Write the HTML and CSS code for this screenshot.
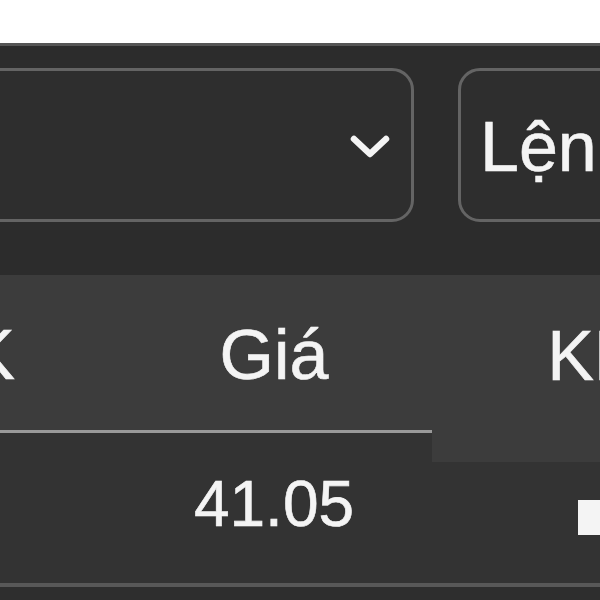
FILE: index.html
```html
<!DOCTYPE html>
<html lang="vi">
<head>
  <meta charset="UTF-8">
  <meta name="viewport" content="width=device-width, initial-scale=1.0"/>
  <title>Lệnh - Bảng giá</title>
  <link rel="stylesheet" href="styles.css">
</head>
<body>

  <div class="panel">
    <!-- Filters -->
    <div class="filters">
      <div class="select">
        <svg class="chevron" width="44" height="30" viewBox="0 0 44 30">
          <path d="M6 7 L22 22 L38 7" fill="none" stroke="#f4f4f4" stroke-width="6.5" stroke-linecap="round" stroke-linejoin="round"/>
        </svg>
      </div>
      <div class="order-type">Lệnh</div>
    </div>

    <!-- Price table -->
    <div class="table">
      <div class="row head">
        <div class="cell ck">Mã CK</div>
        <div class="cell price">Giá</div>
        <div class="cell kl">KL</div>
      </div>
      <div class="row data">
        <div class="cell ck"></div>
        <div class="cell price">41.05</div>
        <div class="cell kl"><span class="vol-bar"></span></div>
      </div>
    </div>
  </div>

</body>
</html>
```

FILE: styles.css
```css
/* Global Styles */
* {
  margin: 0;
  padding: 0;
  box-sizing: border-box;
}

body {
  font-family: 'Liberation Sans', Arial, sans-serif;
  background-color: #fff;
  color: #f4f4f4;
  overflow: hidden;
}

/* Panel */
.panel {
  margin-top: 43px;
  border-top: 3px solid #555;
  background: #2e2e2e;
  min-height: calc(100vh - 43px);
  overflow: hidden;
}

/* Filters */
.filters {
  display: flex;
  gap: 44px;
  margin-left: -40px;
  padding: 22px 0 53px;
  background: #2c2c2c;
}

.select {
  flex: 0 0 454px;
  height: 154px;
  border: 3px solid #646464;
  border-radius: 22px;
  background: #2e2e2e;
  display: flex;
  align-items: center;
  justify-content: flex-end;
  padding-right: 19px;
}

.chevron {
  margin-top: 4px;
}

.order-type {
  flex: 0 0 300px;
  height: 154px;
  border: 3px solid #646464;
  border-radius: 22px;
  background: #2e2e2e;
  display: flex;
  align-items: center;
  padding-left: 19px;
  padding-top: 4px;
  font-size: 70px;
  -webkit-text-stroke: 0.6px #f4f4f4;
}

/* Table */
.row {
  display: grid;
  grid-template-columns: 316px 316px 316px;
  margin-left: -200px;
}

.cell {
  display: flex;
  align-items: center;
  justify-content: center;
  -webkit-text-stroke: 0.6px #f4f4f4;
}

.head {
  background: #3c3c3c;
  font-size: 70px;
}

.head .cell {
  height: 158px;
  padding-top: 4px;
}

.head .ck,
.head .price {
  border-bottom: 3px solid #9a9a9a;
}

.head .ck {
  justify-content: flex-end;
  padding-right: 101px;
}

.data {
  background: #333;
  border-bottom: 4px solid #585858;
  font-size: 64px;
}

.data .cell {
  height: 150px;
}

.data .price {
  padding-bottom: 8px;
}

.data .kl {
  background: linear-gradient(#3c3c3c 0 29px, transparent 29px);
  justify-content: flex-start;
  padding-left: 146px;
}

.vol-bar {
  display: block;
  width: 24px;
  height: 35px;
  margin-top: 18px;
  background: #f4f4f4;
}
```
